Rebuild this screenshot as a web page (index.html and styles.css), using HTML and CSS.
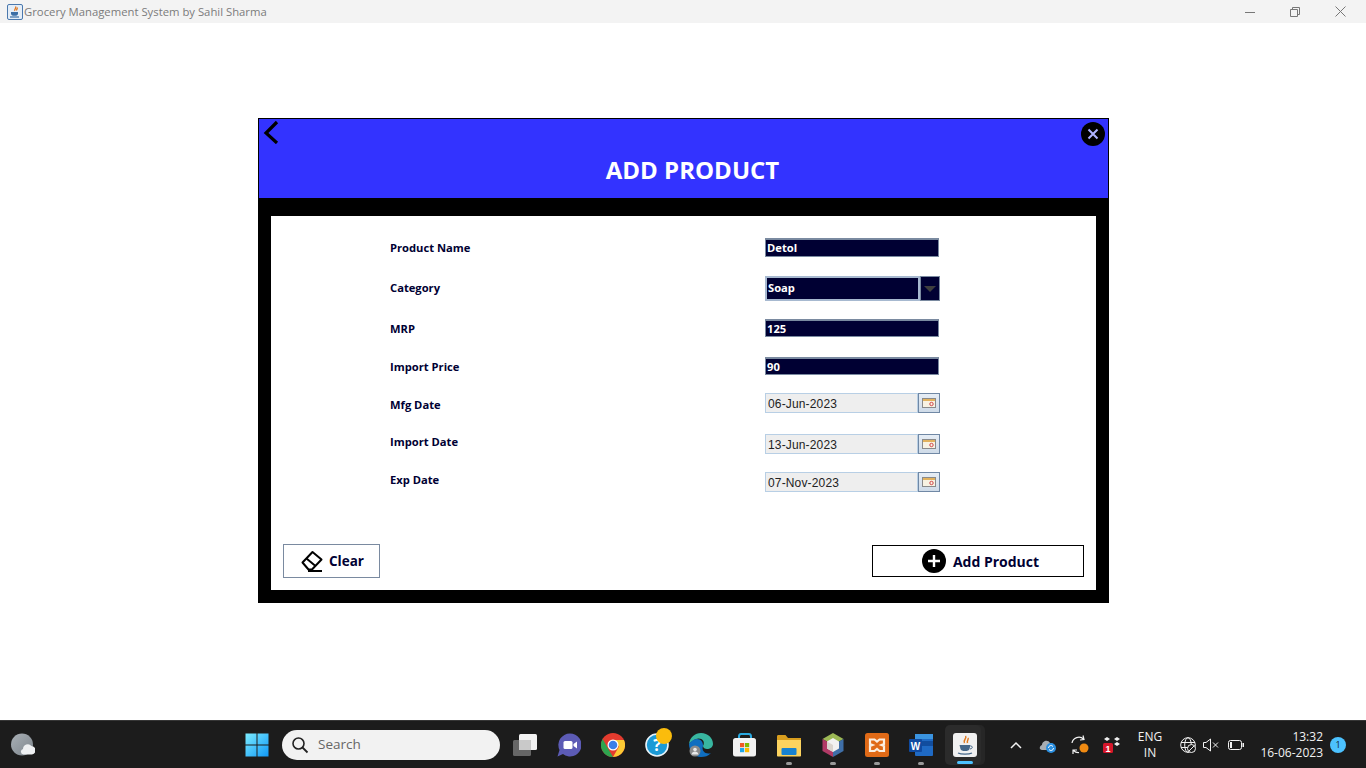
FILE: index.html
```html
<!DOCTYPE html>
<html lang="en">
<head>
<meta charset="utf-8">
<title>Grocery Management System by Sahil Sharma</title>
<link rel="stylesheet" href="styles.css">
</head>
<body>
<header class="titlebar">
  <svg class="app-icon" width="16" height="16" viewBox="0 0 16 16"><rect x=".5" y=".5" width="15" height="15" rx="1.5" fill="#e4edf7" stroke="#4a78ad"/><path d="M8.5 2.5c1.5 1.5-1.8 2.6-.6 4.4M10.2 3.5c.6 1-1 1.600-.5 3" fill="none" stroke="#e2761b" stroke-width="1.300"/><path d="M4 8h7v1.500c0 1.500-1 2.300-3.500 2.300S4 11 4 9.500z" fill="#3b6ea5"/><path d="M3 13h9" stroke="#3b6ea5" stroke-width="1.200"/></svg>
  <span class="app-title">Grocery Management System by Sahil Sharma</span>
  <div class="win-controls">
    <svg class="wc-min" width="10" height="10" viewBox="0 0 10 10"><path d="M0 5.500h10" stroke="#777" fill="none"/></svg>
    <svg class="wc-max" width="10" height="10" viewBox="0 0 10 10"><path d="M.5 2.500h7v7h-7zM2.500 2.500v-2h7v7h-2" stroke="#777" fill="none"/></svg>
    <svg class="wc-close" width="11" height="11" viewBox="0 0 11 11"><path d="M.5.500l10 10M10.500.500l-10 10" stroke="#777" fill="none"/></svg>
  </div>
</header>

<main class="desktop">
  <section class="panel">
    <div class="panel-head">
      <div class="head-icons">
        <svg width="16" height="24" viewBox="0 0 16 24"><path d="M14 2L3 13l11 10" fill="none" stroke="#000" stroke-width="3.200"/></svg>
        <svg width="24" height="24" viewBox="0 0 24 24"><circle cx="12" cy="12" r="12" fill="#000"/><path d="M7.500 7.500l9 9M16.500 7.500l-9 9" stroke="#aeb2ff" stroke-width="2"/></svg>
      </div>
      <h1 class="panel-title">ADD PRODUCT</h1>
    </div>
    <div class="panel-body">
      <form class="form">
        <div class="row row-gap1"><label class="lbl">Product Name</label><div class="text-field">Detol</div></div>
        <div class="row row-gap2">
          <label class="lbl lbl-up1">Category</label>
          <div class="combo"><div class="combo-value">Soap</div><div class="combo-arrow"><svg width="12" height="6" viewBox="0 0 12 6"><path d="M0 0h12L6 6z" fill="#3e3e3e"/></svg></div></div>
        </div>
        <div class="row row-gap3"><label class="lbl lbl-down1">MRP</label><div class="text-field short">125</div></div>
        <div class="row row-gap4"><label class="lbl lbl-down1">Import Price</label><div class="text-field short">90</div></div>
        <div class="row row-gap5"><label class="lbl lbl-down">Mfg Date</label>
          <div class="date"><div class="date-value">06-Jun-2023</div><div class="date-btn"><svg width="14" height="10" viewBox="0 0 14 10"><rect x=".5" y=".5" width="13" height="9" fill="#f8f2e2" stroke="#8a8a8a"/><rect x="1" y="1" width="12" height="2" fill="#e2b25e"/><circle cx="9.500" cy="6" r="1.700" fill="none" stroke="#d0454a"/></svg></div></div>
        </div>
        <div class="row row-gap6"><label class="lbl lbl-up">Import Date</label>
          <div class="date"><div class="date-value">13-Jun-2023</div><div class="date-btn"><svg width="14" height="10" viewBox="0 0 14 10"><rect x=".5" y=".5" width="13" height="9" fill="#f8f2e2" stroke="#8a8a8a"/><rect x="1" y="1" width="12" height="2" fill="#e2b25e"/><circle cx="9.500" cy="6" r="1.700" fill="none" stroke="#d0454a"/></svg></div></div>
        </div>
        <div class="row"><label class="lbl lbl-up">Exp Date</label>
          <div class="date"><div class="date-value">07-Nov-2023</div><div class="date-btn"><svg width="14" height="10" viewBox="0 0 14 10"><rect x=".5" y=".5" width="13" height="9" fill="#f8f2e2" stroke="#8a8a8a"/><rect x="1" y="1" width="12" height="2" fill="#e2b25e"/><circle cx="9.500" cy="6" r="1.700" fill="none" stroke="#d0454a"/></svg></div></div>
        </div>
      </form>
      <div class="actions">
        <div class="btn btn-clear">
          <svg width="22" height="22" viewBox="0 0 22 22"><path d="M1.500 12.500L11.500 2l9 7.500-9.500 10H7.500z" fill="none" stroke="#000" stroke-width="2" stroke-linejoin="round"/><path d="M5.500 8.500l9 7.500" stroke="#000" stroke-width="2"/><path d="M7 21h14" stroke="#000" stroke-width="2"/></svg>
          <span class="clear-text">Clear</span>
        </div>
        <div class="btn btn-add">
          <svg width="24" height="24" viewBox="0 0 24 24"><circle cx="12" cy="12" r="12" fill="#000"/><path d="M12 6v12M6 12h12" stroke="#fff" stroke-width="2.400"/></svg>
          <span>Add Product</span>
        </div>
      </div>
    </div>
  </section>
</main>

<footer class="taskbar">
  <svg class="weather" width="24" height="24" viewBox="0 0 24 24"><defs><linearGradient id="sky" x1="0" y1="0" x2="1" y2="1"><stop offset="0" stop-color="#a9b0b6"/><stop offset="1" stop-color="#7d858c"/></linearGradient></defs><circle cx="11" cy="11.500" r="11" fill="url(#sky)"/><path d="M12.500 21.500a2.800 2.800 0 0 1-.5-5.500 4.800 4.800 0 0 1 8.500-3 4.300 4.300 0 0 1 .5 8.500z" fill="#eef0f2"/></svg>
  <div class="slot slot-start"><svg width="24" height="24" viewBox="0 0 24 24"><defs><linearGradient id="win" x1="0" y1="0" x2="1" y2="1"><stop offset="0" stop-color="#7cecff"/><stop offset="1" stop-color="#1098f7"/></linearGradient></defs><path d="M.5.500h11v11H.5zM12.500.500h11v11h-11zM.5 12.500h11v11H.5zM12.500 12.500h11v11h-11z" fill="url(#win)"/></svg></div>
  <div class="search">
    <svg width="18" height="18" viewBox="0 0 18 18"><circle cx="7.500" cy="7.500" r="5.500" fill="none" stroke="#222" stroke-width="1.600"/><path d="M11.500 11.500l5 5" stroke="#222" stroke-width="1.800"/></svg>
    <span class="search-text">Search</span>
  </div>
  <div class="apps">
    <div class="slot"><svg width="24" height="24" viewBox="0 0 24 24"><rect x="6" y="1" width="18" height="16" rx="1.500" fill="#f3f3f3"/><rect x="0" y="7" width="18" height="16" rx="1.500" fill="#6f6f6f" fill-opacity=".9"/><rect x="6" y="7" width="12" height="10" fill="#c9c9c9"/></svg></div>
    <div class="slot"><svg width="24" height="24" viewBox="0 0 24 24"><path d="M13 .5a11.500 11.500 0 1 1-7 20.600L.5 23.500 2.500 17A11.500 11.500 0 0 1 13 .5z" fill="#5c5bb5"/><rect x="6.500" y="8" width="9" height="8" rx="1.500" fill="#fff"/><path d="M16.500 11l3.500-2.500v7L16.500 13z" fill="#fff"/></svg></div>
    <div class="slot"><svg width="24" height="24" viewBox="0 0 24 24"><circle cx="12" cy="12" r="12" fill="#e33b2e"/><path d="M12 24A12 12 0 0 1 1.600 6l6 10.500z" fill="#2fa44f"/><path d="M23 7a12 12 0 0 1-11 17l6-10.500L12 7z" fill="#fcc934"/><circle cx="12" cy="12" r="5.500" fill="#fff"/><circle cx="12" cy="12" r="4.300" fill="#3b7fe8"/></svg></div>
    <div class="slot"><svg class="over" width="24" height="24" viewBox="0 0 24 24"><circle cx="12" cy="12" r="11" fill="#1b9ad6" stroke="#e9f3f8" stroke-width="1.600"/><text x="12" y="18" class="help-q">?</text><circle cx="19" cy="3" r="8" fill="#fbbc0c"/></svg></div>
    <div class="slot"><svg width="24" height="24" viewBox="0 0 24 24"><path d="M0 11C1 4 6 0 12 0c7 0 12 5 12 11 0 3-3 5-6 5-2 0-4-1-4-3 3-5-2-9-7-7-3 1-5 3-7 5z" fill="#38b6a0"/><path d="M0 11c2-3 5-5 8-5 4 0 6 3 6 7-2 5 3 9 8 7-3 3-6 4-10 4C5 24 0 18 0 11z" fill="#0f6ec0"/><circle cx="6" cy="18" r="5.500" fill="#8b8b8b"/><circle cx="6" cy="16.500" r="1.800" fill="#e8e8e8"/><path d="M2.500 21.500c.5-4 6.500-4 7 0z" fill="#e8e8e8"/></svg></div>
    <div class="slot"><svg width="24" height="24" viewBox="0 0 24 24"><path d="M6 7V3.500C6 2 7 1 8 1h8c1 0 2 1 2 2.500V7" fill="none" stroke="#29a9e0" stroke-width="2"/><rect x="0" y="5" width="23" height="18.500" rx="2.500" fill="#f2f2f2"/><path d="M7 10h4.200v4.200H7z" fill="#ef5a24"/><path d="M12 10h4.200v4.200H12z" fill="#7fba00"/><path d="M7 15h4.200v4.200H7z" fill="#1fa7e8"/><path d="M12 15h4.200v4.200H12z" fill="#fcb900"/></svg></div>
    <div class="slot has-dot"><svg width="24" height="24" viewBox="0 0 24 24"><path d="M0 3.500C0 2.500.5 2 1.500 2h7L11 5h13v18H0z" fill="#d99e1e"/><path d="M0 7h24v15.500c0 .5-.5 1-1 1H1c-.5 0-1-.5-1-1z" fill="#fcd35f"/><rect x="4.500" y="15" width="15" height="7" rx="1" fill="#1782d0"/></svg></div>
    <div class="slot has-dot"><svg width="24" height="24" viewBox="0 0 24 24"><path d="M12 0l10.500 6L12 12 1.500 6z" fill="#9cb855"/><path d="M1.500 6L12 12v12L1.500 18z" fill="#b13a66"/><path d="M22.500 6L12 12v12l10.500-6z" fill="#3f6fa8"/><path d="M12 5l6 3.500v7L12 19l-6-3.500v-7z" fill="#f1f1f1"/><path d="M12 12v7l-6-3.500v-7z" fill="#d9d4cd"/></svg></div>
    <div class="slot has-dot"><svg width="24" height="24" viewBox="0 0 24 24"><rect width="24" height="24" rx="2.500" fill="#e06a17"/><path d="M5 6.500h4.500l2.500 2 2.500-2H19v4.500l-2.500 1 2.500 1V18h-4.500L12 16l-2.500 2H5v-5l2.500-1-2.500-1z" fill="none" stroke="#fbeee0" stroke-width="2.200"/></svg></div>
    <div class="slot has-dot"><svg width="24" height="24" viewBox="0 0 24 24"><rect x="6" y="1" width="18" height="22" rx="1" fill="#1f6ac4"/><path d="M6 8h18v5H6z" fill="#114d9e"/><path d="M6 1h18v5H6z" fill="#3b94e0"/><rect x="0" y="6" width="13" height="13" rx="1" fill="#0f4aa0"/><text x="6.500" y="16.500" class="word-w">W</text></svg></div>
    <div class="slot slot-active"><svg width="24" height="24" viewBox="0 0 24 24"><rect width="24" height="24" rx="3" fill="#f1f1f1"/><path d="M12.500 3c2 2.500-3 4-1 7M15 5c1 1.500-1.500 2.500-.5 5" fill="none" stroke="#e07a1f" stroke-width="1.500"/><path d="M6.500 12h11l-1 4c-.5 1.500-2 2-4.500 2s-4-.5-4.500-2z" fill="#46688a"/><path d="M17.500 13c2.500 0 2.500 2.500-.5 3" fill="none" stroke="#46688a"/><path d="M5 20c3 1.500 11 1.500 14 0" fill="none" stroke="#46688a" stroke-width="1.200"/></svg></div>
  </div>
  <div class="tray">
    <div class="tslot"><svg width="12" height="8" viewBox="0 0 12 8"><path d="M1 7l5-5 5 5" fill="none" stroke="#f2f2f2" stroke-width="1.500"/></svg></div>
    <div class="tslot"><svg width="18" height="16" viewBox="0 0 18 16"><path d="M3 13C0 13 0 9 3 8c0-4 6-6 8-2 3-.5 4 2 3 4v3z" fill="#a8adb2"/><circle cx="12" cy="11" r="5" fill="#2a8fe0"/><path d="M9.500 11a2.500 2.500 0 0 1 4.500-1.500M14.500 11a2.500 2.500 0 0 1-4.500 1.500" fill="none" stroke="#fff"/></svg></div>
    <div class="tslot"><svg width="20" height="20" viewBox="0 0 20 20"><path d="M2 8a7 7 0 0 1 11.500-4M13 .5L14 4.500 10 5M9 17.500A7 7 0 0 1 3.500 15.500M3 19v-4h4" fill="none" stroke="#f2f2f2" stroke-width="1.200"/><circle cx="14" cy="13" r="4.500" fill="#f08a12"/></svg></div>
    <div class="tslot"><svg width="18" height="18" viewBox="0 0 18 18"><path d="M4 1l3 2-3 2-3-2zM14 1l3 2-3 2-3-2zM14 6l3 2-3 2-3-2zM9 3h2" fill="#f0f0f0"/><rect x="0" y="7" width="10" height="10" rx="1.500" fill="#d5162a"/><text x="5" y="15.500" class="tray-one">1</text></svg></div>
    <div class="lang"><span>ENG</span><span>IN</span></div>
    <div class="tslot tslot-globe"><svg width="16" height="16" viewBox="0 0 16 16"><g fill="none" stroke="#f2f2f2"><circle cx="8" cy="8" r="7.300"/><ellipse cx="8" cy="8" rx="3.300" ry="7.300"/><path d="M1 5.500h14M1 10.500h14"/></g><circle cx="11.500" cy="11.500" r="4" fill="#1c1c1c" stroke="#f2f2f2"/><path d="M9 14l5-5" stroke="#f2f2f2"/></svg></div>
    <div class="tslot tslot-vol"><svg width="16" height="14" viewBox="0 0 16 14"><path d="M.5 4.500h2.500L7.500 1v12L3 9.500H.5z" fill="none" stroke="#f2f2f2"/><path d="M10 4.500l5 5M15 4.500l-5 5" stroke="#f2f2f2"/></svg></div>
    <div class="tslot tslot-bat"><svg width="16" height="10" viewBox="0 0 16 10"><rect x=".5" y=".5" width="13" height="9" rx="2" fill="none" stroke="#f2f2f2"/><rect x="2" y="2" width="2" height="6" fill="#f2f2f2"/><rect x="14.500" y="3" width="1.500" height="4" fill="#f2f2f2"/></svg></div>
    <div class="clock"><span>13:32</span><span>16-06-2023</span></div>
    <div class="notif">1</div>
  </div>
</footer>
</body>
</html>
```
FILE: styles.css
```css
* { box-sizing: border-box; }
html, body { margin: 0; height: 100%; }
body {
  width: 1366px;
  height: 768px;
  overflow: hidden;
  display: flex;
  flex-direction: column;
  background: #fff;
  font-family: "Open Sans", "Liberation Sans", sans-serif;
}
svg { display: block; flex: none; }

/* title bar */
.titlebar {
  height: 23px;
  flex: none;
  display: flex;
  align-items: center;
  background: #f3f3f3;
  padding-left: 7px;
}
.app-title { margin-left: 1px; font-size: 11.3px; color: #7b7b7b; }
.win-controls { margin-left: auto; display: flex; align-items: center; padding-right: 20px; }
.wc-max { margin-left: 35px; }
.wc-close { margin-left: 35px; }

/* main */
.desktop { flex: 1; padding: 95px 0 0 258px; }
.panel {
  width: 851px;
  height: 485px;
  border: 1px solid #000;
  background: #000;
  display: flex;
  flex-direction: column;
}
.panel-head { height: 79px; flex: none; background: #3333ff; display: flex; flex-direction: column; }
.head-icons { display: flex; justify-content: space-between; padding: 1px 3px 0 4px; height: 34px; }
.head-icons svg:last-child { margin-top: 2px; }
.panel-title {
  margin: 0;
  padding-left: 18px;
  text-align: center;
  color: #fff;
  font-size: 24px;
  line-height: 34px;
  font-weight: 700;
}
.panel-body {
  flex: none;
  height: 374px;
  margin: 18px 12px 0;
  background: #fff;
  display: flex;
  flex-direction: column;
  justify-content: space-between;
  padding: 22px 12px 12px;
}

/* form */
.form { display: flex; flex-direction: column; padding-left: 107px; }
.row { display: flex; align-items: center; }
.row-gap1 { margin-bottom: 19px; }
.row-gap2 { margin-bottom: 18px; }
.row-gap3 { margin-bottom: 20px; }
.row-gap4 { margin-bottom: 18px; }
.row-gap5 { margin-bottom: 21px; }
.row-gap6 { margin-bottom: 18px; }
.lbl { width: 375px; flex: none; font-size: 11.2px; line-height: 16px; font-weight: 700; color: #000033; }
.lbl-down { margin-top: 4px; }
.lbl-down1 { margin-top: 2px; }
.lbl-up { margin-bottom: 4px; }
.lbl-up1 { margin-bottom: 2px; }

.text-field {
  width: 174px;
  height: 19px;
  background: #000033;
  border: 1px solid #7a8aa0;
  border-top-width: 2px;
  color: #fff;
  font-size: 11.2px;
  font-weight: 700;
  line-height: 16px;
  padding-left: 1px;
}
.text-field.short { height: 18px; }

.combo { width: 175px; height: 25px; display: flex; background: #7a8aa0; }
.combo-value {
  width: 155px;
  background: #000033;
  border: 2px solid #a7b9d0;
  color: #fff;
  font-size: 11.2px;
  font-weight: 700;
  line-height: 20px;
  padding-left: 1px;
}
.combo-arrow {
  flex: 1;
  background: #000033;
  border: 1px solid #7a8aa0;
  display: flex;
  align-items: center;
  justify-content: center;
}

.date { width: 175px; height: 20px; display: flex; }
.date-value {
  width: 153px;
  background: #eeeeee;
  border: 1px solid #b8cfe5;
  font-family: "Liberation Sans", Arial, sans-serif;
  font-size: 12px;
  line-height: 17px;
  color: #222;
  padding: 2px 0 0 2px;
  letter-spacing: .15px;
}
.date-btn {
  flex: 1;
  background: linear-gradient(#e6edf5, #cfdbe8);
  border: 1px solid #7088a5;
  display: flex;
  align-items: center;
  justify-content: center;
}

/* buttons */
.actions { display: flex; justify-content: space-between; align-items: center; }
.btn { display: flex; align-items: center; justify-content: center; font-size: 14px; font-weight: 700; color: #000033; background: #fff; }
.btn-clear { width: 97px; height: 34px; border: 1px solid #7a8aa0; gap: 6px; padding-left: 2px; }
.clear-text { font-size: 13.5px; }
.btn-add { width: 212px; height: 32px; border: 1px solid #000; gap: 7px; padding-left: 5px; }

/* taskbar */
.taskbar {
  height: 48px;
  flex: none;
  display: flex;
  align-items: center;
  background: #1c1c1c;
  border-top: 1px solid #363636;
  padding-left: 11px;
}
.weather { margin-right: 200px; }
.slot {
  width: 44px;
  height: 40px;
  flex: none;
  display: flex;
  align-items: center;
  justify-content: center;
  position: relative;
}
.slot .over { overflow: visible; }
.has-dot::after {
  content: "";
  position: absolute;
  left: 19px;
  top: 37px;
  width: 6px;
  height: 3px;
  border-radius: 2px;
  background: #9a9a9a;
}
.slot-active {
  width: 36px;
  margin-left: 2px;
  padding-left: 4px;
  background: #2b2b2b;
  border-radius: 5px;
  box-shadow: 4px 0 0 #262626;
}
.slot-active::after {
  content: "";
  position: absolute;
  left: 12px;
  top: 36px;
  width: 16px;
  height: 3px;
  border-radius: 2px;
  background: #4cc2ff;
}
.search {
  width: 218px;
  height: 30px;
  flex: none;
  margin-left: 3px;
  border-radius: 15px;
  background: #f2f2f2;
  display: flex;
  align-items: center;
  padding-left: 9px;
  gap: 9px;
  font-size: 13.5px;
  color: #666;
}
.search-text { margin-bottom: 1px; }
.apps { display: flex; align-items: center; margin-left: 3px; }
.help-q { font: 700 16px "Open Sans", sans-serif; fill: #fff; text-anchor: middle; }
.word-w { font: 700 10px "Liberation Sans", sans-serif; fill: #fff; text-anchor: middle; }
.tray-one { font: 700 9px "Liberation Sans", sans-serif; fill: #fff; text-anchor: middle; }

.tray { margin-left: auto; padding-right: 20px; display: flex; align-items: center; color: #f2f2f2; }
.tslot { width: 32px; height: 40px; display: flex; align-items: center; justify-content: center; flex: none; }
.tslot-globe { width: 24px; margin-left: 4px; }
.tslot-vol { width: 22px; }
.tslot-bat { width: 24px; margin-left: 2px; }
.lang {
  width: 44px;
  flex: none;
  display: flex;
  flex-direction: column;
  align-items: center;
  font-size: 12px;
  line-height: 16px;
}
.clock {
  width: 73px;
  flex: none;
  margin-left: 2px;
  display: flex;
  flex-direction: column;
  align-items: flex-end;
  font-size: 12px;
  line-height: 16px;
}
.notif {
  width: 16px;
  height: 16px;
  flex: none;
  margin-left: 7px;
  border-radius: 50%;
  background: #4cc2ff;
  color: #123;
  font-size: 9px;
  line-height: 16px;
  text-align: center;
}
```
